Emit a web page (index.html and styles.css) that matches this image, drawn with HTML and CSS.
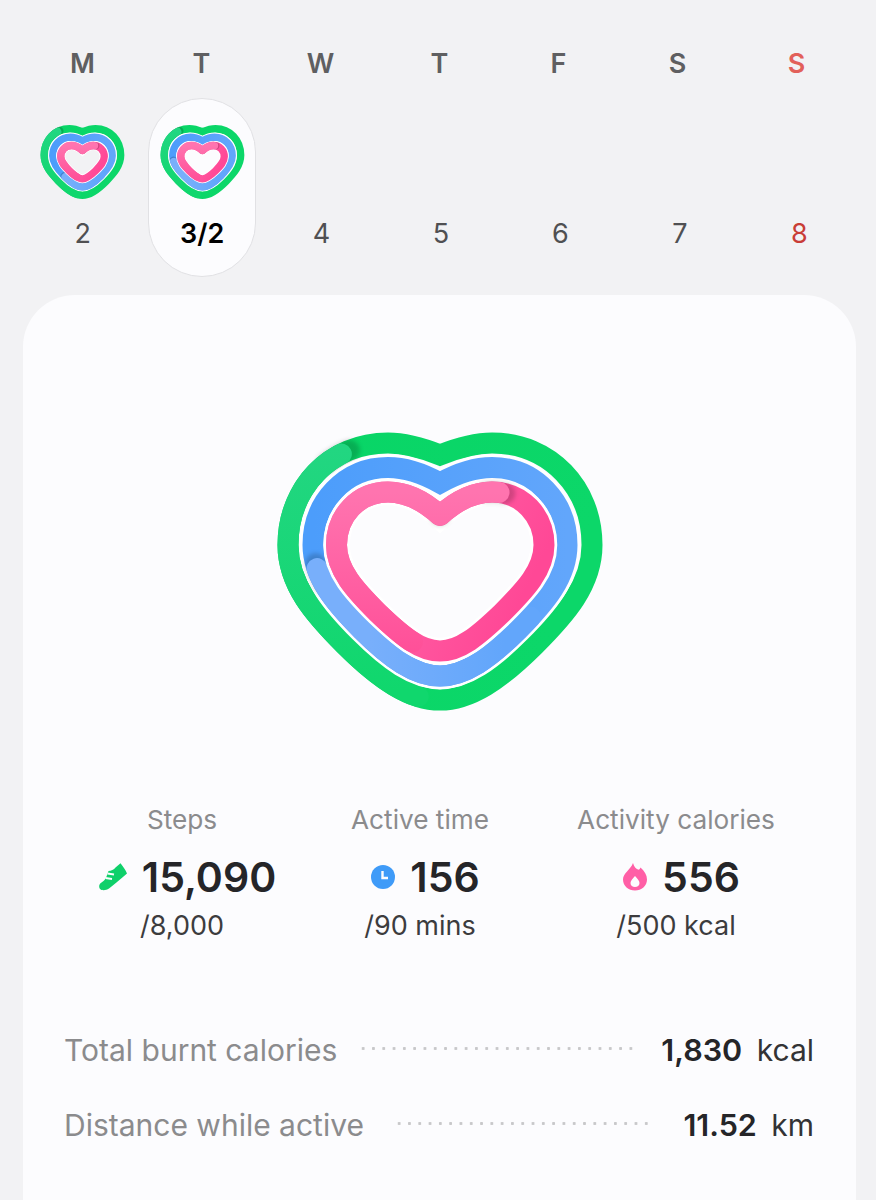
FILE: index.html
```html
<!DOCTYPE html>
<html lang="en">
<head>
  <meta charset="UTF-8">
  <title>Daily activity</title>
  <link rel="stylesheet" href="styles.css">
</head>
<body>

  <svg class="defs" width="0" height="0">
    <defs>
      <linearGradient id="greenGrad" x1="0" y1="0" x2="1" y2="0.3">
        <stop offset="0" stop-color="#08d566"/>
        <stop offset="1" stop-color="#0cd769"/>
      </linearGradient>
      <linearGradient id="blueGrad" x1="0" y1="0" x2="1" y2="0">
        <stop offset="0" stop-color="#4c9dfb"/>
        <stop offset="1" stop-color="#62a6fb"/>
      </linearGradient>
      <linearGradient id="pinkGrad" x1="0" y1="0" x2="1" y2="0.4">
        <stop offset="0" stop-color="#ff6fae"/>
        <stop offset="1" stop-color="#ff4896"/>
      </linearGradient>
      <linearGradient id="greenTail" gradientUnits="userSpaceOnUse" x1="0" y1="30" x2="0" y2="270">
        <stop offset="0" stop-color="#22d681"/>
        <stop offset="1" stop-color="#10d76d"/>
      </linearGradient>
      <linearGradient id="blueTail" gradientUnits="userSpaceOnUse" x1="110" y1="0" x2="245" y2="0">
        <stop offset="0" stop-color="#78affb"/>
        <stop offset="1" stop-color="#62a6fb"/>
      </linearGradient>
      <linearGradient id="pinkTail" gradientUnits="userSpaceOnUse" x1="0" y1="72" x2="0" y2="235">
        <stop offset="0" stop-color="#ff74af"/>
        <stop offset="1" stop-color="#ff4f98"/>
      </linearGradient>
      <path id="ringGreen" pathLength="100" d="M180 35 C160 27 145 23 128 23 C70 23 28 68 28 125 C28 165 55 195 85 225 C120 260 150 280 180 280 C210 280 240 260 275 225 C305 195 332 165 332 125 C332 68 290 23 232 23 C215 23 200 27 180 35 Z"/>
      <path id="ringBlue" pathLength="100" d="M180 63 C162 53 146 47.5 128 47.5 C85 47.5 53 82 53 125 C53 157 75 183 102 210 C130 238 155 256 180 256 C205 256 230 238 258 210 C285 183 307 157 307 125 C307 82 275 47.5 232 47.5 C214 47.5 198 53 180 63 Z"/>
      <path id="ringPink" pathLength="100" d="M180 95.500 C164 81 148 72 128 72 C98 72 76.5 96 76.5 125 C76.5 150 95 170 118 193 C142 216 160 231 180 231 C200 231 218 216 242 193 C265 170 284 150 284 125 C284 96 262 72 232 72 C212 72 196 81 180 95.500 Z"/>
      <g id="layerGreen">
        <use href="#ringGreen" class="ring ring-green"/>
        <use href="#ringGreen" class="cap-shadow green-shadow"/>
        <use href="#ringGreen" class="tail green-tail tail-green"/>
      </g>
      <g id="layerBlue">
        <use href="#ringBlue" class="ring-gap"/>
        <use href="#ringBlue" class="ring ring-blue"/>
        <use href="#ringBlue" class="cap-shadow blue-shadow"/>
        <use href="#ringBlue" class="tail blue-tail tail-blue"/>
      </g>
      <g id="layerPink">
        <use href="#ringPink" class="ring-gap"/>
        <use href="#ringPink" class="ring ring-pink"/>
        <use href="#ringPink" class="cap-shadow pink-shadow"/>
        <use href="#ringPink" class="tail pink-tail tail-pink"/>
      </g>
      <symbol id="heart" viewBox="0 0 360 300">
        <use href="#layerGreen"/>
        <use href="#layerBlue"/>
        <use href="#layerPink"/>
      </symbol>
      <!-- the small hearts have heavier rings, so each ring gets its own scale -->
      <symbol id="heartSmall" viewBox="0 0 93 80">
        <use href="#layerGreen" class="small-green" transform="translate(1.27 .87) scale(.251 .258)"/>
        <use href="#layerBlue" class="small-blue" transform="translate(4.26 3.9) scale(.2346 .238)"/>
        <use href="#layerPink" class="small-pink" transform="translate(8.63 8.42) scale(.21 .2094)"/>
      </symbol>
    </defs>
  </svg>

  <div class="week-head">
    <span>M</span>
    <span>T</span>
    <span>W</span>
    <span>T</span>
    <span>F</span>
    <span>S</span>
    <span class="sunday">S</span>
  </div>

  <div class="week-days">
    <div class="day first-day">
      <svg class="day-heart"><use href="#heartSmall"/></svg>
      <span class="day-num">2</span>
    </div>
    <div class="day today">
      <svg class="day-heart"><use href="#heartSmall"/></svg>
      <span class="day-num">3/2</span>
    </div>
    <div class="day"><div class="day-empty"></div><span class="day-num">4</span></div>
    <div class="day"><div class="day-empty"></div><span class="day-num">5</span></div>
    <div class="day"><div class="day-empty"></div><span class="day-num">6</span></div>
    <div class="day"><div class="day-empty"></div><span class="day-num">7</span></div>
    <div class="day sunday-num"><div class="day-empty"></div><span class="day-num">8</span></div>
  </div>

  <div class="card">
    <svg class="big-heart" viewBox="0 0 360 300"><use href="#heart"/></svg>

    <div class="stats">
      <div class="stat">
        <div class="stat-label">Steps</div>
        <div class="stat-value">
          <svg class="stat-icon shoe" viewBox="0 0 28 28"><path d="M21.500 .3C24 3.500 26.500 7 28 10.500C22 16 15 21.500 10 25.500C7 27.500 3 27.800 1 26C-.5 24 0 21 2.500 19.500C5 18 6.500 16 7.500 13.500L9.500 8C12 8 15 6.500 16.500 4.500Z" fill="#0fd06a"/><path d="M8.500 10.500L15 11.500M6.500 15L13 16" stroke="#fcfcfe" stroke-width="2" fill="none"/></svg>
          <span>15,090</span>
        </div>
        <div class="stat-goal">/8,000</div>
      </div>
      <div class="stat">
        <div class="stat-label">Active time</div>
        <div class="stat-value">
          <svg class="stat-icon" viewBox="0 0 24 24"><circle cx="12" cy="12" r="12" fill="#3f9bf8"/><path d="M11.500 6V13H17" stroke="#fcfcfe" stroke-width="2.400" fill="none"/></svg>
          <span>156</span>
        </div>
        <div class="stat-goal">/90 mins</div>
      </div>
      <div class="stat">
        <div class="stat-label">Activity calories</div>
        <div class="stat-value">
          <svg class="stat-icon flame" viewBox="0 0 24 28"><path fill-rule="evenodd" d="M10 0C11 4 13 5.500 15 6.500C16 7 17 6 17.500 4.500C21.500 8 24 12 24 16.500C24 23 18.500 27.500 12 27.500C5.500 27.500 0 23 0 16.500C0 10 7.500 7 10 0ZM12 13C10 15.500 7.500 17.500 7.500 20C7.500 22.500 9.500 24 12 24C14.500 24 16.500 22.500 16.500 20C16.500 17.500 14 15.500 12 13Z" fill="#ff5fa6"/></svg>
          <span>556</span>
        </div>
        <div class="stat-goal">/500 kcal</div>
      </div>
    </div>

    <div class="totals">
      <div class="total-row">
        <span class="total-label">Total burnt calories</span>
        <span class="dots"></span>
        <span class="total-value"><b>1,830</b> kcal</span>
      </div>
      <div class="total-row">
        <span class="total-label">Distance while active</span>
        <span class="dots"></span>
        <span class="total-value"><b>11.52</b> km</span>
      </div>
    </div>
  </div>

</body>
</html>
```

FILE: styles.css
```css
html, body {
  height: 1200px;
  overflow: hidden;
}

body {
  margin: 0;
  background: #f2f2f4;
  font-family: Inter, Roboto, sans-serif;
  color: #252528;
}

.defs {
  position: absolute;
}

.week-head {
  display: grid;
  grid-template-columns: repeat(7, 1fr);
  padding: 47px 20px 0 23px;
  height: 98px;
  box-sizing: border-box;
  text-align: center;
  font-size: 27px;
  line-height: 33px;
  font-weight: 600;
  color: #5f5f61;
}

.sunday {
  color: #e2605a;
}

.week-days {
  display: grid;
  grid-template-columns: repeat(7, 1fr);
  padding: 0 17px 0 23px;
  text-align: center;
}

.day {
  display: flex;
  flex-direction: column;
  align-items: center;
  height: 179px;
  padding-top: 24px;
  box-sizing: border-box;
  font-size: 27px;
  color: #505052;
}

.first-day {
  --blue-offset: -38;
  --blue-length: 25;
}

.today {
  justify-self: center;
  width: 108px;
  background: #fcfcfe;
  border: 1px solid #e1e1e4;
  border-radius: 54px;
  padding-top: 23px;
  font-weight: 600;
  color: #000;
}

.sunday-num {
  color: #c93d36;
}

.day-heart, .day-empty {
  width: 93px;
  height: 80px;
  flex: none;
}

.day-num {
  margin-top: 15px;
  line-height: 33px;
}

/* rings: widths are set on the layer so the small hearts can override them */
.ring, .tail, .cap-shadow, .ring-gap {
  fill: none;
  stroke-width: var(--ring-width, 21px);
}

.ring-green {
  stroke: url(#greenGrad);
}

.ring-blue {
  stroke: url(#blueGrad);
}

.ring-pink {
  stroke: url(#pinkGrad);
  stroke-linejoin: round;
}

.ring-gap {
  stroke: #fff;
  stroke-width: var(--gap-width, 26.5px);
}

.small-green {
  --ring-width: 30px;
}

.small-blue {
  --ring-width: 31px;
  --gap-width: 39.5px;
}

.small-pink {
  --ring-width: 35px;
  --gap-width: 43.5px;
}

.tail, .cap-shadow {
  stroke-linecap: round;
}

.cap-shadow {
  stroke: #000;
  stroke-opacity: 0.18;
  filter: blur(2px);
}

.tail-green {
  stroke: url(#greenTail);
}

.tail-blue {
  stroke: url(#blueTail);
}

.tail-pink {
  stroke: url(#pinkTail);
  stroke-linejoin: round;
}

.green-tail {
  stroke-dasharray: 36 100;
  stroke-dashoffset: -11.5;
}

.blue-tail {
  stroke-dasharray: var(--blue-length, 38) 100;
  stroke-dashoffset: var(--blue-offset, -27);
}

.pink-tail {
  stroke-dasharray: 45 44 11;
}

/* shadows only sit around the cap of each tail */
.green-shadow {
  stroke-dasharray: 3 100;
  stroke-dashoffset: -10.5;
}

.blue-shadow {
  stroke-dasharray: 3 100;
  stroke-dashoffset: calc(var(--blue-offset, -27) + 0.7);
}

.pink-shadow {
  stroke-dasharray: 0 88 3 9;
}

.card {
  margin: 18px 20px 0 23px;
  height: 960px;
  background: #fcfcfe;
  border-radius: 52px;
  display: flow-root;
}

.big-heart {
  display: block;
  width: 360px;
  height: 300px;
  margin: 125px auto 0;
}

.stats {
  display: grid;
  grid-template-columns: 238px 238px 274px;
  padding: 0 43px 0 40px;
  margin-top: 84px;
  text-align: center;
}

.stat-label {
  font-size: 26.2px;
  line-height: 32px;
  color: #8b8b8d;
}

.stat-value {
  display: flex;
  align-items: center;
  justify-content: center;
  gap: 15px;
  margin: 14px 0 0 11px;
  font-size: 41px;
  line-height: 54px;
  font-weight: 600;
}

.stat-icon {
  width: 24px;
  height: 24px;
}

.shoe {
  width: 28px;
  height: 28px;
}

.flame {
  width: 24px;
  height: 28px;
}

.stat-goal {
  margin-top: 6px;
  font-size: 27px;
  line-height: 32px;
  color: #3c3c3e;
}

.totals {
  margin-top: 90px;
  padding: 0 42px 0 41px;
  display: flex;
  flex-direction: column;
  gap: 39px;
}

.total-row {
  display: flex;
  align-items: center;
  font-size: 30px;
  line-height: 36px;
}

.total-label {
  color: #8b8b8d;
}

.dots {
  flex: 1;
  height: 3px;
  margin: -4px 22px 0 21px;
  background: radial-gradient(circle, #c8c8ca 1.3px, transparent 1.7px) 0 0 / 10.3px 3px repeat-x;
}

.total-row + .total-row .dots {
  margin: -4px 30px 0 30px;
}

.total-value {
  color: #333335;
  white-space: pre;
}

.total-value b {
  font-size: 30.5px;
  font-weight: 600;
  color: #252528;
  margin-right: 6px;
}
```
